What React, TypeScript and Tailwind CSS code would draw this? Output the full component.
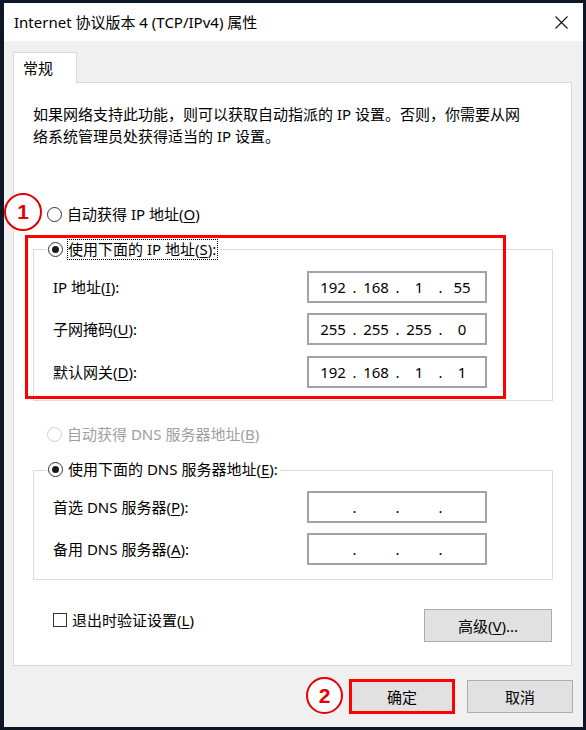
import React, { Fragment } from "react";

function Radio({ checked, disabled }: { checked?: boolean; disabled?: boolean }) {
  return (
    <span
      className={
        disabled
          ? "w-[15px] h-[15px] shrink-0 rounded-full border border-[#cfcfcf] bg-white flex items-center justify-center"
          : "w-[15px] h-[15px] shrink-0 rounded-full border border-[#333333] bg-white flex items-center justify-center"
      }
    >
      {checked && <span className="w-[7px] h-[7px] rounded-full bg-[#1a1a1a]" />}
    </span>
  );
}

function U({ c }: { c: string }) {
  return <span className="underline underline-offset-[2px] decoration-[1px]">{c}</span>;
}

function IpField({ parts }: { parts: string[] }) {
  return (
    <div className="w-[180px] h-[32px] border-2 border-[#a3a3a3] bg-white flex items-center pl-[9px]">
      {parts.map((p, i) => (
        <Fragment key={i}>
          {i > 0 && <span className="w-[13px] text-center">.</span>}
          <span className="w-[30px] text-center">{p}</span>
        </Fragment>
      ))}
    </div>
  );
}

function Row({ label, parts, mt }: { label: React.ReactNode; parts: string[]; mt: string }) {
  return (
    <div className={`flex items-center pl-[19px] ${mt}`}>
      <div className="w-[254px] whitespace-nowrap">{label}</div>
      <IpField parts={parts} />
    </div>
  );
}

function Btn({ children, w }: { children: React.ReactNode; w: string }) {
  return (
    <div
      className={`${w} h-[33px] bg-[#e1e1e1] border border-[#adadad] flex items-center justify-center`}
    >
      {children}
    </div>
  );
}

export default function App() {
  return (
    <div className="relative w-[586px] h-[730px] bg-[#0d1727] pt-[3px] pl-[4px] overflow-hidden font-['Noto_Sans','Noto_Sans_CJK_SC',sans-serif] text-[15px] leading-[20px] text-black">
      <div className="w-[579px] h-[724px] flex flex-col bg-[#f0f0f0]">
        {/* Title bar */}
        <div className="h-[38px] bg-white flex items-center justify-between pl-[10px] pr-[15px]">
          <span className="whitespace-nowrap">Internet 协议版本 4 (TCP/IPv4) 属性</span>
          <svg width="13" height="13" viewBox="0 0 13 13">
            <path d="M0.5 0.5 L12.5 12.5 M12.5 0.5 L0.5 12.5" stroke="#111" strokeWidth="1.1" fill="none" />
          </svg>
        </div>

        {/* Body */}
        <div className="flex-1 flex flex-col pt-[11px]">
          {/* Tab */}
          <div className="ml-[9px] w-[64px] h-[31px] -mb-px relative z-10 bg-white border border-b-0 border-[#d9d9d9] pl-[9px] flex items-center">
            常规
          </div>

          {/* Panel */}
          <div className="ml-[9px] w-[559px] h-[584px] bg-white border border-[#d9d9d9] flex flex-col pl-[19px] pt-[20px]">
            <div className="leading-[22px] whitespace-nowrap">
              <div>如果网络支持此功能，则可以获取自动指派的 IP 设置。否则，你需要从网</div>
              <div>络系统管理员处获得适当的 IP 设置。</div>
            </div>

            <div className="mt-[57px] h-[20px] ml-[14px] flex items-center gap-[5px]">
              <Radio />
              <span>
                自动获得 IP 地址(<U c="O" />)
              </span>
            </div>

            {/* IP group */}
            <div className="mt-[25px] w-[520px] border border-[#dcdcdc] flex flex-col pb-[12px]">
              <div className="-mt-[11px] ml-[13px] h-[20px] w-fit bg-white pl-[1px] pr-[2px] flex items-center gap-[4px]">
                <Radio checked />
                <span className="h-[21px] border border-dotted border-black flex items-center pr-[1px]">
                  使用下面的 IP 地址(<U c="S" />):
                </span>
              </div>
              <Row mt="mt-[12px]" label={<>IP 地址(<U c="I" />):</>} parts={["192", "168", "1", "55"]} />
              <Row mt="mt-[10px]" label={<>子网掩码(<U c="U" />):</>} parts={["255", "255", "255", "0"]} />
              <Row mt="mt-[11px]" label={<>默认网关(<U c="D" />):</>} parts={["192", "168", "1", "1"]} />
            </div>

            <div className="mt-[23px] h-[20px] ml-[14px] flex items-center gap-[5px] text-[#a0a0a0]">
              <Radio disabled />
              <span>
                自动获得 DNS 服务器地址(<U c="B" />)
              </span>
            </div>

            {/* DNS group */}
            <div className="mt-[26px] w-[520px] border border-[#dcdcdc] flex flex-col pb-[14px]">
              <div className="-mt-[12px] ml-[13px] h-[20px] w-fit bg-white pl-[1px] pr-[2px] flex items-center gap-[5px]">
                <Radio checked />
                <span>
                  使用下面的 DNS 服务器地址(<U c="E" />):
                </span>
              </div>
              <Row mt="mt-[12px]" label={<>首选 DNS 服务器(<U c="P" />):</>} parts={["", "", "", ""]} />
              <Row mt="mt-[10px]" label={<>备用 DNS 服务器(<U c="A" />):</>} parts={["", "", "", ""]} />
            </div>

            {/* Checkbox + advanced */}
            <div className="mt-[29px] w-[520px] flex items-start justify-between pl-[20px] pr-[1px]">
              <div className="mt-[1px] h-[20px] flex items-center gap-[5px]">
                <span className="w-[14px] h-[14px] border border-[#333333] bg-white" />
                <span>
                  退出时验证设置(<U c="L" />)
                </span>
              </div>
              <Btn w="w-[128px]">
                高级(<U c="V" />)...
              </Btn>
            </div>
          </div>

          {/* Bottom buttons */}
          <div className="mt-[14px] flex justify-end gap-[12px] pr-[10px]">
            <Btn w="w-[106px]">确定</Btn>
            <Btn w="w-[106px]">取消</Btn>
          </div>
        </div>
      </div>

      {/* Annotations */}
      <div className="absolute left-[25px] top-[235px] w-[481px] h-[164px] border-[3px] border-[#ff0000]" />
      <div className="absolute left-[349px] top-[679px] w-[106px] h-[35px] border-[3px] border-[#ff0000]" />
      <div className="absolute left-[4px] top-[193px] w-[38px] h-[38px] rounded-full border-2 border-[#e60000] bg-white flex items-center justify-center font-['Liberation_Sans',sans-serif] font-bold text-[21px] text-[#e60000]">
        1
      </div>
      <div className="absolute left-[306px] top-[677px] w-[37px] h-[37px] rounded-full border-2 border-[#e60000] bg-white flex items-center justify-center font-['Liberation_Sans',sans-serif] font-bold text-[21px] text-[#e60000]">
        2
      </div>
    </div>
  );
}
